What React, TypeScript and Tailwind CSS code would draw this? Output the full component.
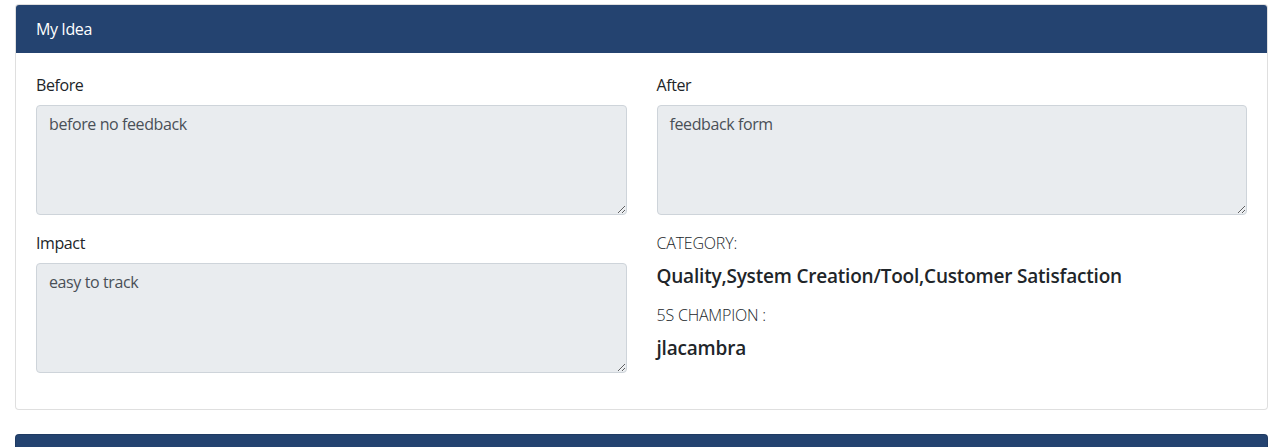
import React from "react";

const font = { fontFamily: '"Open Sans", "Noto Sans", sans-serif' };

function Field({ label, value }: { label: string; value: string }) {
  return (
    <div className="mb-4">
      <label className="block mb-2 text-[16px] leading-6 text-[#212529] tracking-[-0.4px]">{label}</label>
      <textarea
        readOnly
        rows={4}
        value={value}
        className="block w-full h-[110px] rounded-[4px] border border-[#ced4da] bg-[#e9ecef] px-3 py-1.5 text-[16px] leading-6 text-[#495057] outline-none resize-y tracking-[-0.4px]"
      />
    </div>
  );
}

export default function App() {
  return (
    <div className="bg-white w-[1280px] h-[447px] overflow-hidden pl-[15px] pr-[12px] pt-[4px] text-[#212529]" style={font}>
      <div className="rounded-[4px] border border-[rgba(0,0,0,0.125)] bg-white">
        <div className="bg-[#244370] text-white px-5 py-3 text-[16px] leading-6 rounded-t-[3px] tracking-[-0.4px]">My Idea</div>
        <div className="p-5 pb-0">
          <div className="grid grid-cols-2 gap-x-[30px]">
            <Field label="Before" value="before no feedback" />
            <Field label="After" value="feedback form" />
            <Field label="Impact" value="easy to track" />
            <div>
              <div className="text-[16px] leading-6 font-light tracking-[-0.2px]">CATEGORY:</div>
              <div className="text-[19px] leading-6 font-semibold mt-[9px] tracking-[-0.2px]">Quality,System Creation/Tool,Customer Satisfaction</div>
              <div className="text-[16px] leading-6 font-light mt-[15px] tracking-[-0.2px]">5S CHAMPION :</div>
              <div className="text-[19px] leading-6 font-semibold mt-[9px] tracking-[-0.2px]">jlacambra</div>
            </div>
          </div>
          <div className="h-5" />
        </div>
      </div>
      <div className="mt-[24px] rounded-t-[4px] border border-[rgba(0,0,0,0.125)] bg-[#244370] h-[40px]" />
    </div>
  );
}
